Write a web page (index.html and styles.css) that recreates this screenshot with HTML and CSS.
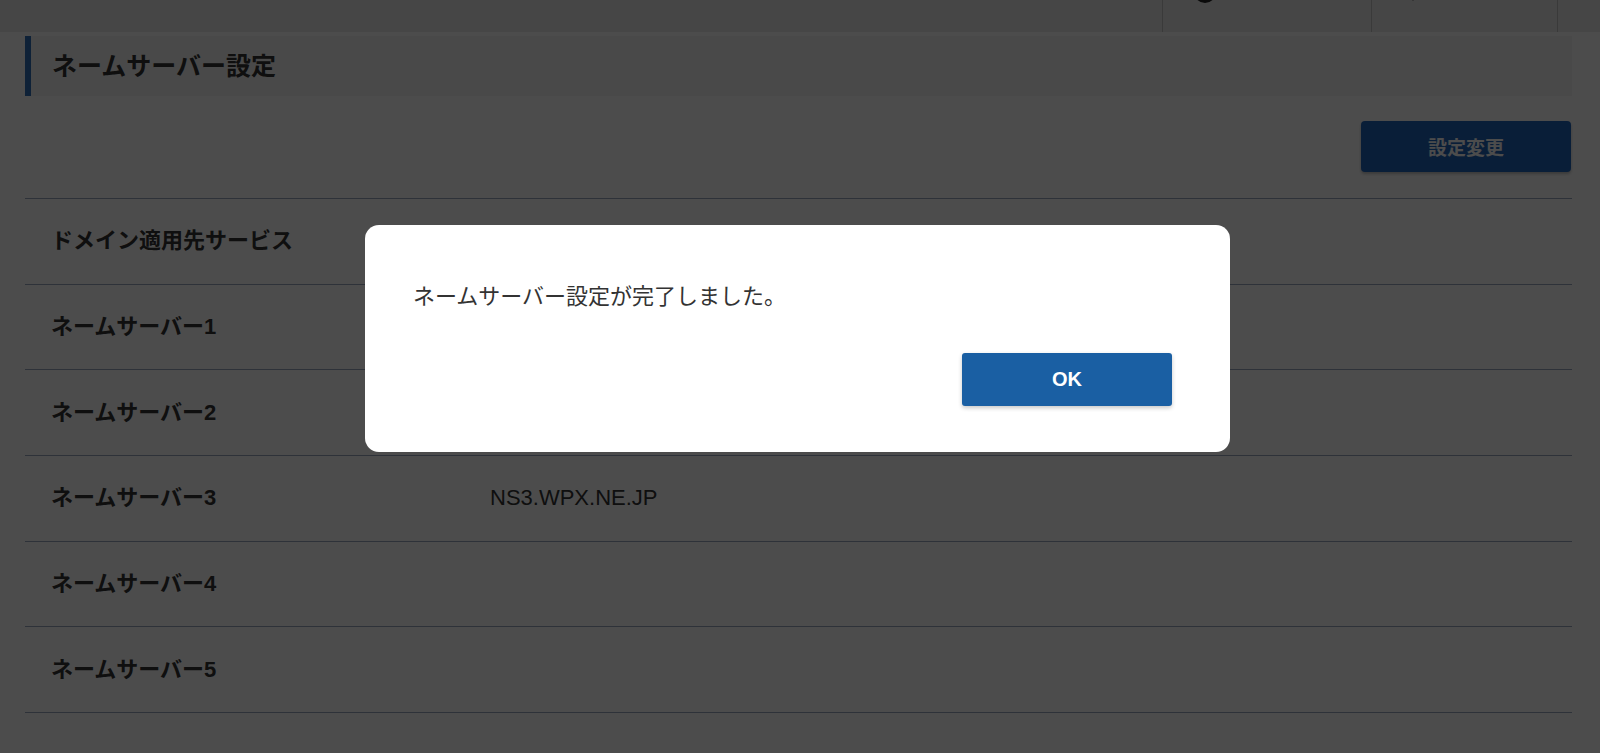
FILE: index.html
```html
<!DOCTYPE html>
<html lang="ja">
<head>
<meta charset="utf-8">
<title>ネームサーバー設定</title>
<link rel="stylesheet" href="styles.css">
</head>
<body>
<header class="topbar">
  <div class="topbar-spacer"></div>
  <div class="topbar-item item-user">
    <svg class="icon-user" viewBox="0 0 24 24" width="24" height="24"><circle cx="12" cy="12" r="11" fill="#222"/><circle cx="12" cy="9" r="4" fill="#eee"/></svg>
  </div>
  <div class="topbar-item item-help">
    <svg class="icon-help" viewBox="0 0 10 10" width="10" height="10"><path d="M2 2 L5 8 L8 2 Z" fill="#222"/></svg>
  </div>
  <div class="topbar-item item-end"></div>
</header>

<main class="content">
  <h1 class="section-title">ネームサーバー設定</h1>
  <div class="actions">
    <button class="btn-primary" type="button">設定変更</button>
  </div>
  <div class="table">
    <div class="row"><div class="label">ドメイン適用先サービス</div><div class="value"></div></div>
    <div class="row"><div class="label">ネームサーバー1</div><div class="value"></div></div>
    <div class="row"><div class="label">ネームサーバー2</div><div class="value"></div></div>
    <div class="row"><div class="label">ネームサーバー3</div><div class="value">NS3.WPX.NE.JP</div></div>
    <div class="row"><div class="label">ネームサーバー4</div><div class="value"></div></div>
    <div class="row"><div class="label">ネームサーバー5</div><div class="value"></div></div>
  </div>
</main>

<div class="overlay"></div>
<div class="modal" role="dialog">
  <p class="modal-message">ネームサーバー設定が完了しました。</p>
  <div class="modal-footer">
    <button class="btn-ok" type="button">OK</button>
  </div>
</div>
</body>
</html>
```

FILE: styles.css
```css
* { box-sizing: border-box; }

html, body {
  margin: 0;
  padding: 0;
  height: 100%;
  overflow: hidden;
}

body {
  background: #ffffff;
  color: #333333;
  font-family: "Liberation Sans", "Noto Sans CJK JP", sans-serif;
}

.topbar {
  display: flex;
  height: 32px;
  background: #ececec;
  overflow: hidden;
}

.topbar-spacer { flex: 1; }

.topbar-item {
  border-left: 1px solid #c4c4c4;
  display: flex;
  align-items: flex-start;
}

.item-user { width: 209px; padding-left: 30px; }
.item-help { width: 186px; padding-left: 36px; }
.item-end { width: 43px; }

.icon-user { margin-top: -20px; }
.icon-help { margin-top: -7px; }

.content {
  padding: 4px 28px 0 25px;
}

.section-title {
  margin: 0;
  height: 60px;
  display: flex;
  align-items: center;
  background: #f6f6f6;
  border-left: 6px solid #2f6fb8;
  padding-left: 21px;
  padding-bottom: 4px;
  font-size: 25px;
  font-weight: bold;
  color: #333333;
}

.actions {
  display: flex;
  justify-content: flex-end;
  padding: 25px 1px 26px 0;
}

.btn-primary {
  width: 210px;
  height: 51px;
  border: none;
  border-radius: 4px;
  background: #2164bb;
  color: #ffffff;
  font-family: inherit;
  font-size: 19px;
  font-weight: bold;
  box-shadow: 0 2px 3px rgba(0, 0, 0, 0.25);
}

.table {
  border-top: 1px solid #9aa8c0;
}

.row {
  display: grid;
  grid-template-columns: 465px 1fr;
  align-items: center;
  height: 85.7px;
  border-bottom: 1px solid #9aa8c0;
  font-size: 22px;
}

.label {
  padding-left: 26px;
  padding-bottom: 6px;
  font-weight: bold;
  color: #333333;
}

.value {
  color: #333333;
}

.overlay {
  position: fixed;
  inset: 0;
  background: rgba(0, 0, 0, 0.7);
}

.modal {
  position: fixed;
  top: 225px;
  left: 365px;
  width: 865px;
  height: 227px;
  background: #ffffff;
  border-radius: 14px;
  padding: 57px 58px 46px 48px;
}

.modal-message {
  margin: 0;
  font-size: 22px;
  line-height: 30px;
  color: #333333;
}

.modal-footer {
  display: flex;
  justify-content: flex-end;
  margin-top: 41px;
}

.btn-ok {
  width: 210px;
  height: 53px;
  border: none;
  border-radius: 3px;
  background: #1a5fa3;
  color: #ffffff;
  font-family: "Liberation Sans", "Noto Sans CJK JP", sans-serif;
  font-size: 20px;
  font-weight: bold;
  box-shadow: 0 2px 4px rgba(0, 0, 0, 0.22);
}
```
